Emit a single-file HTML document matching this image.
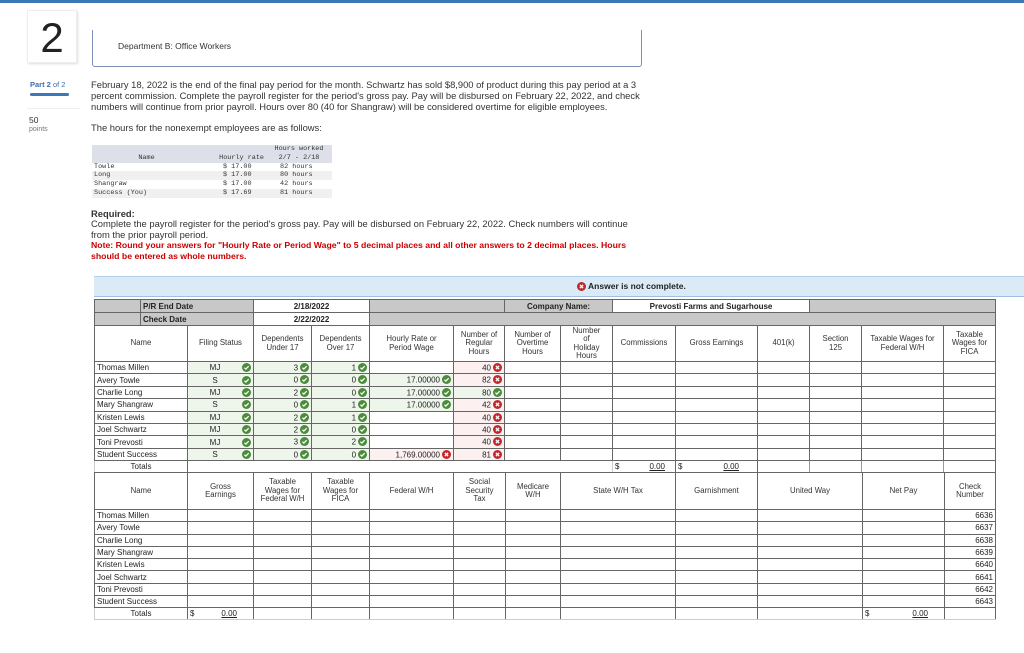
<!DOCTYPE html>
<html><head><meta charset="utf-8">
<style>
*{margin:0;padding:0;box-sizing:border-box}
body{width:1024px;height:653px;background:#fff;font-family:"Liberation Sans",Arial,sans-serif;color:#333;position:relative;overflow:hidden}
.abs{position:absolute}
.p{font-size:9.4px;line-height:11px;color:#333}
table{border-collapse:collapse;table-layout:fixed;position:absolute;font-size:8px;color:#222}
td{border:1px solid #666;padding:0 2px;overflow:hidden;white-space:nowrap;vertical-align:middle}
.g{background:#c8c8c8}
.c{text-align:center}
.r{text-align:right}
.hd td{white-space:normal;text-align:center;line-height:8.5px;color:#333;font-size:7.8px;padding:0 5px}
.ok{background:#eef6ec}
.bad{background:#fdf0f0}
.ic{display:inline-block;width:9px;height:9px;vertical-align:-1.5px;margin-left:2px}
.fl{float:right}
.u{text-decoration:underline}
.hrs td{border:none;padding:0 0 0 2px;font-family:"Liberation Mono",monospace;font-size:6.8px;line-height:8.8px;color:#333}
</style></head><body>
<div class="abs" style="left:0;top:0;width:1024px;height:3px;background:#3a78b8"></div>
<div class="abs" style="left:27px;top:10px;width:50px;height:53px;border:1px solid #eee;box-shadow:1px 1px 2px #ddd;font-size:42px;text-align:center;line-height:53px;color:#222">2</div>
<div class="abs" style="left:92px;top:30px;width:550px;height:37px;border:1px solid #7a8fb5;border-top:none;border-radius:0 0 3px 3px"></div>
<div class="abs p" style="left:118px;top:41px;font-size:8.5px">Department B: Office Workers</div>
<div class="abs" style="left:30px;top:80px;font-size:7.5px;color:#3a6fb0"><b>Part 2</b> of 2</div>
<div class="abs" style="left:30px;top:93px;width:39px;height:3px;background:#3a78b8;border-radius:2px"></div>
<div class="abs" style="left:27px;top:108px;width:53px;height:1px;background:#eee"></div>
<div class="abs" style="left:29px;top:115px;font-size:8.5px;color:#333">50</div>
<div class="abs" style="left:29px;top:126px;font-size:7px;color:#777">points</div>
<div class="abs p" style="left:91px;top:79px;width:560px">February 18, 2022 is the end of the final pay period for the month. Schwartz has sold $8,900 of product during this pay period at a 3 percent commission. Complete the payroll register for the period's gross pay. Pay will be disbursed on February 22, 2022, and check numbers will continue from prior payroll. Hours over 80 (40 for Shangraw) will be considered overtime for eligible employees.</div>
<div class="abs p" style="left:91px;top:122px">The hours for the nonexempt employees are as follows:</div>
<table class="hrs" style="left:92px;top:145px;width:240px">
<colgroup><col style="width:107px"><col style="width:65px"><col style="width:68px"></colgroup>
<tr style="background:#dde0e8"><td></td><td></td><td style="text-align:center">Hours worked</td></tr>
<tr style="background:#dde0e8"><td style="text-align:center">Name</td><td style="text-align:right">Hourly rate</td><td style="text-align:center">2/7 - 2/18</td></tr>
<tr><td>Towle</td><td style="padding-left:24px">$ 17.00</td><td style="padding-left:16px">82 hours</td></tr>
<tr style="background:#f0f0f0"><td>Long</td><td style="padding-left:24px">$ 17.00</td><td style="padding-left:16px">80 hours</td></tr>
<tr><td>Shangraw</td><td style="padding-left:24px">$ 17.00</td><td style="padding-left:16px">42 hours</td></tr>
<tr style="background:#f0f0f0"><td>Success (You)</td><td style="padding-left:24px">$ 17.69</td><td style="padding-left:16px">81 hours</td></tr>
</table>
<div class="abs p" style="left:91px;top:208px"><b>Required:</b></div>
<div class="abs p" style="left:91px;top:218px;width:548px">Complete the payroll register for the period's gross pay. Pay will be disbursed on February 22, 2022. Check numbers will continue from the prior payroll period.</div>
<div class="abs p" style="left:91px;top:240px;width:555px;color:#c00;font-weight:bold;font-size:8.7px">Note: Round your answers for "Hourly Rate or Period Wage" to 5 decimal places and all other answers to 2 decimal places. Hours should be entered as whole numbers.</div>

<div class="abs" style="left:94px;top:276px;width:930px;height:21px;background:#dbeaf7;border-top:1px solid #b5d0ea;border-bottom:1px solid #9fc0e0"></div>
<div class="abs" style="left:575px;top:281px;font-size:8.5px;font-weight:bold;color:#222"><svg class="ic" viewBox="0 0 10 10"><circle cx="5" cy="5" r="5" fill="#c0282d"/><path d="M3.2 3.2L6.8 6.8M6.8 3.2L3.2 6.8" stroke="#fff" stroke-width="1.4"/></svg> Answer is not complete.</div>

<svg width="0" height="0" style="position:absolute"><defs>
<symbol id="ok" viewBox="0 0 10 10"><circle cx="5" cy="5" r="5" fill="#4b8b3b"/><path d="M2.7 5.2L4.3 6.8L7.4 3.6" stroke="#fff" stroke-width="1.4" fill="none"/></symbol>
<symbol id="no" viewBox="0 0 10 10"><circle cx="5" cy="5" r="5" fill="#c0282d"/><path d="M3.2 3.2L6.8 6.8M6.8 3.2L3.2 6.8" stroke="#fff" stroke-width="1.4"/></symbol>
</defs></svg>

<table style="left:94px;top:299px;width:901px">
<colgroup><col style="width:46px"><col style="width:47px"><col style="width:66px"><col style="width:58px"><col style="width:58px"><col style="width:84px"><col style="width:51px"><col style="width:56px"><col style="width:52px"><col style="width:63px"><col style="width:82px"><col style="width:52px"><col style="width:52px"><col style="width:82px"><col style="width:52px"></colgroup>
<tr style="height:13px;font-weight:bold"><td class="g"></td><td class="g" colspan="2">P/R End Date</td><td colspan="2" class="c">2/18/2022</td><td class="g" colspan="2"></td><td class="g c" colspan="2">Company Name:</td><td colspan="3" class="c">Prevosti Farms and Sugarhouse</td><td class="g" colspan="3"></td></tr>
<tr style="height:13px;font-weight:bold"><td class="g"></td><td class="g" colspan="2">Check Date</td><td colspan="2" class="c">2/22/2022</td><td class="g" colspan="10"></td></tr>
<tr class="hd" style="height:36px"><td colspan="2">Name</td><td>Filing Status</td><td>Dependents Under 17</td><td>Dependents Over 17</td><td style="padding:0 12px">Hourly Rate or Period Wage</td><td>Number of Regular Hours</td><td>Number of Overtime Hours</td><td style="padding:0 10px">Number of Holiday Hours</td><td>Commissions</td><td>Gross Earnings</td><td>401(k)</td><td style="padding:0 12px">Section 125</td><td>Taxable Wages for Federal W/H</td><td style="padding:0 2px">Taxable Wages for FICA</td></tr>
<tr style="height:12.4px"><td colspan="2">Thomas Millen</td><td class="ok c">MJ<svg class="ic fl"><use href="#ok"/></svg></td><td class="ok r">3<svg class="ic"><use href="#ok"/></svg></td><td class="ok r">1<svg class="ic"><use href="#ok"/></svg></td><td></td><td class="bad r">40<svg class="ic"><use href="#no"/></svg></td><td></td><td></td><td></td><td></td><td></td><td></td><td></td><td></td></tr>
<tr style="height:12.4px"><td colspan="2">Avery Towle</td><td class="ok c">S<svg class="ic fl"><use href="#ok"/></svg></td><td class="ok r">0<svg class="ic"><use href="#ok"/></svg></td><td class="ok r">0<svg class="ic"><use href="#ok"/></svg></td><td class="ok r">17.00000<svg class="ic"><use href="#ok"/></svg></td><td class="bad r">82<svg class="ic"><use href="#no"/></svg></td><td></td><td></td><td></td><td></td><td></td><td></td><td></td><td></td></tr>
<tr style="height:12.4px"><td colspan="2">Charlie Long</td><td class="ok c">MJ<svg class="ic fl"><use href="#ok"/></svg></td><td class="ok r">2<svg class="ic"><use href="#ok"/></svg></td><td class="ok r">0<svg class="ic"><use href="#ok"/></svg></td><td class="ok r">17.00000<svg class="ic"><use href="#ok"/></svg></td><td class="ok r">80<svg class="ic"><use href="#ok"/></svg></td><td></td><td></td><td></td><td></td><td></td><td></td><td></td><td></td></tr>
<tr style="height:12.4px"><td colspan="2">Mary Shangraw</td><td class="ok c">S<svg class="ic fl"><use href="#ok"/></svg></td><td class="ok r">0<svg class="ic"><use href="#ok"/></svg></td><td class="ok r">1<svg class="ic"><use href="#ok"/></svg></td><td class="ok r">17.00000<svg class="ic"><use href="#ok"/></svg></td><td class="bad r">42<svg class="ic"><use href="#no"/></svg></td><td></td><td></td><td></td><td></td><td></td><td></td><td></td><td></td></tr>
<tr style="height:12.4px"><td colspan="2">Kristen Lewis</td><td class="ok c">MJ<svg class="ic fl"><use href="#ok"/></svg></td><td class="ok r">2<svg class="ic"><use href="#ok"/></svg></td><td class="ok r">1<svg class="ic"><use href="#ok"/></svg></td><td></td><td class="bad r">40<svg class="ic"><use href="#no"/></svg></td><td></td><td></td><td></td><td></td><td></td><td></td><td></td><td></td></tr>
<tr style="height:12.4px"><td colspan="2">Joel Schwartz</td><td class="ok c">MJ<svg class="ic fl"><use href="#ok"/></svg></td><td class="ok r">2<svg class="ic"><use href="#ok"/></svg></td><td class="ok r">0<svg class="ic"><use href="#ok"/></svg></td><td></td><td class="bad r">40<svg class="ic"><use href="#no"/></svg></td><td></td><td></td><td></td><td></td><td></td><td></td><td></td><td></td></tr>
<tr style="height:12.4px"><td colspan="2">Toni Prevosti</td><td class="ok c">MJ<svg class="ic fl"><use href="#ok"/></svg></td><td class="ok r">3<svg class="ic"><use href="#ok"/></svg></td><td class="ok r">2<svg class="ic"><use href="#ok"/></svg></td><td></td><td class="bad r">40<svg class="ic"><use href="#no"/></svg></td><td></td><td></td><td></td><td></td><td></td><td></td><td></td><td></td></tr>
<tr style="height:12.4px"><td colspan="2">Student Success</td><td class="ok c">S<svg class="ic fl"><use href="#ok"/></svg></td><td class="ok r">0<svg class="ic"><use href="#ok"/></svg></td><td class="ok r">0<svg class="ic"><use href="#ok"/></svg></td><td class="bad r">1,769.00000<svg class="ic"><use href="#no"/></svg></td><td class="bad r">81<svg class="ic"><use href="#no"/></svg></td><td></td><td></td><td></td><td></td><td></td><td></td><td></td><td></td></tr>
<tr style="height:12px"><td colspan="2" class="c" style="border-color:#ccc #666 #ccc #ccc">Totals</td><td colspan="7" style="border-color:#ccc"></td><td style="border-color:#ccc #666">$<span class="fl u" style="margin-right:8px">0.00</span></td><td style="border-color:#ccc #666">$<span class="fl u" style="margin-right:16px">0.00</span></td><td style="border-color:#ccc #999"></td><td style="border-color:#ccc #999"></td><td style="border-color:#ccc #999"></td><td style="border-color:#ccc #666"></td></tr>
</table>

<table style="left:94px;top:472px;width:901px">
<colgroup><col style="width:93px"><col style="width:66px"><col style="width:58px"><col style="width:58px"><col style="width:84px"><col style="width:52px"><col style="width:55px"><col style="width:115px"><col style="width:82px"><col style="width:105px"><col style="width:82px"><col style="width:51px"></colgroup>
<tr class="hd" style="height:37px"><td>Name</td><td style="padding:0 12px">Gross Earnings</td><td>Taxable Wages for Federal W/H</td><td>Taxable Wages for FICA</td><td>Federal W/H</td><td style="padding:0 8px">Social Security Tax</td><td style="padding:0 8px">Medicare W/H</td><td>State W/H Tax</td><td>Garnishment</td><td>United Way</td><td>Net Pay</td><td style="padding:0 8px">Check Number</td></tr>
<tr style="height:12.3px"><td>Thomas Millen</td><td></td><td></td><td></td><td></td><td></td><td></td><td></td><td></td><td></td><td></td><td class="r">6636</td></tr>
<tr style="height:12.3px"><td>Avery Towle</td><td></td><td></td><td></td><td></td><td></td><td></td><td></td><td></td><td></td><td></td><td class="r">6637</td></tr>
<tr style="height:12.3px"><td>Charlie Long</td><td></td><td></td><td></td><td></td><td></td><td></td><td></td><td></td><td></td><td></td><td class="r">6638</td></tr>
<tr style="height:12.3px"><td>Mary Shangraw</td><td></td><td></td><td></td><td></td><td></td><td></td><td></td><td></td><td></td><td></td><td class="r">6639</td></tr>
<tr style="height:12.3px"><td>Kristen Lewis</td><td></td><td></td><td></td><td></td><td></td><td></td><td></td><td></td><td></td><td></td><td class="r">6640</td></tr>
<tr style="height:12.3px"><td>Joel Schwartz</td><td></td><td></td><td></td><td></td><td></td><td></td><td></td><td></td><td></td><td></td><td class="r">6641</td></tr>
<tr style="height:12.3px"><td>Toni Prevosti</td><td></td><td></td><td></td><td></td><td></td><td></td><td></td><td></td><td></td><td></td><td class="r">6642</td></tr>
<tr style="height:12.3px"><td>Student Success</td><td></td><td></td><td></td><td></td><td></td><td></td><td></td><td></td><td></td><td></td><td class="r">6643</td></tr>
<tr style="height:12px"><td class="c" style="border-left-color:#ccc;border-bottom-color:#ccc">Totals</td><td style="border-bottom-color:#ccc">$<span class="fl u" style="margin-right:14px">0.00</span></td><td style="border-bottom-color:#ccc"></td><td style="border-bottom-color:#ccc"></td><td style="border-bottom-color:#ccc"></td><td style="border-bottom-color:#ccc"></td><td style="border-bottom-color:#ccc"></td><td style="border-bottom-color:#ccc"></td><td style="border-bottom-color:#ccc"></td><td style="border-bottom-color:#ccc"></td><td style="border-bottom-color:#ccc">$<span class="fl u" style="margin-right:14px">0.00</span></td><td style="border-bottom-color:#ccc"></td></tr>
</table>
</body></html>
